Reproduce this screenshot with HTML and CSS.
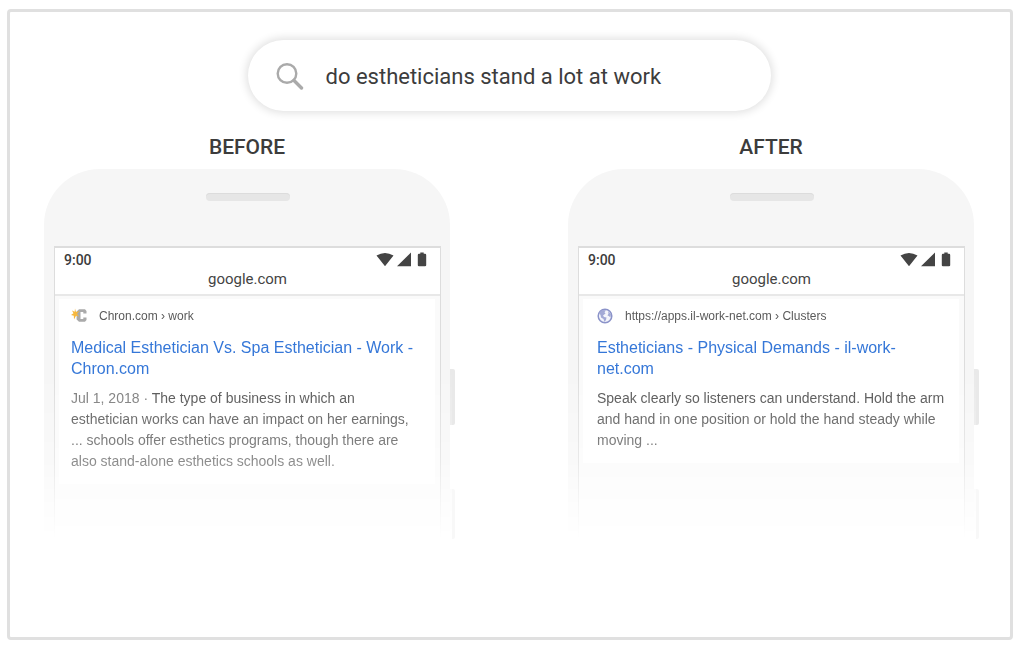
FILE: index.html
```html
<!DOCTYPE html>
<html lang="en">
<head>
<meta charset="utf-8">
<meta name="viewport" content="width=device-width, initial-scale=1">
<title>Search results before and after</title>
<link rel="stylesheet" href="styles.css">
</head>
<body>
<main class="frame">
  <form class="search" role="search">
    <svg class="search-icon" viewBox="0 0 28 28" aria-hidden="true">
      <circle cx="11" cy="11.5" r="9.3" fill="none" stroke="#aaa" stroke-width="2.4"/>
      <path d="M18 18.5 L25.5 26" fill="none" stroke="#aaa" stroke-width="3.4" stroke-linecap="round"/>
    </svg>
    <input class="search-input" type="text" aria-label="Search" value="do estheticians stand a lot at work">
  </form>

  <div class="compare">
    <section class="side">
      <h2 class="label">BEFORE</h2>
      <div class="phone">
        <div class="speaker"></div>
        <div class="screen">
          <header class="bar">
            <div class="status">
              <span class="time">9:00</span>
              <svg class="status-icons" viewBox="0 0 52 16" aria-hidden="true">
                <path d="M0.5 3.5 Q9 -1.5 17.5 3.5 L9 14.2 Z M21 14.2 L35 0.5 V14.2 Z M41.8 3 Q41.8 1.8 43 1.8 H44.3 V0.4 H47.7 V1.8 H49 Q50.2 1.8 50.2 3 V13.2 Q50.2 14.2 49 14.2 H43 Q41.8 14.2 41.8 13.2 Z" fill="#444"/>
              </svg>
            </div>
            <div class="domain">google.com</div>
          </header>
          <article class="result">
            <div class="source">
              <svg class="favicon" viewBox="0 0 16 16" aria-hidden="true">
                <path d="M15.5 5.5 V3 L14 1.3 H8 L5.6 3.6 V11.4 L8 13.7 H14 L15.5 12 V9.4 H12.3 V11 H9.5 V4 H12.3 V5.5 Z" fill="#aaa"/>
                <path d="M4 0.5 L5 4 L8.5 3 L6 5.7 L8 8.5 L5 7.8 L3 11.5 L2.8 7.8 L0 7 L2.5 5.3 L1 2.5 L3.7 3.7 Z" fill="#f6b73c"/>
              </svg>
              <span>Chron.com › work</span>
            </div>
            <h3 class="title"><a class="link" href="#">Medical Esthetician Vs. Spa Esthetician - Work - Chron.com</a></h3>
            <p class="snippet"><span class="date">Jul 1, 2018 ·</span> The type of business in which an esthetician works can have an impact on her earnings, ... schools offer esthetics programs, though there are also stand-alone esthetics schools as well.</p>
          </article>
        </div>
        <div class="key"></div>
        <div class="key key-low"></div>
      </div>
    </section>

    <section class="side">
      <h2 class="label">AFTER</h2>
      <div class="phone">
        <div class="speaker"></div>
        <div class="screen">
          <header class="bar">
            <div class="status">
              <span class="time">9:00</span>
              <svg class="status-icons" viewBox="0 0 52 16" aria-hidden="true">
                <path d="M0.5 3.5 Q9 -1.5 17.5 3.5 L9 14.2 Z M21 14.2 L35 0.5 V14.2 Z M41.8 3 Q41.8 1.8 43 1.8 H44.3 V0.4 H47.7 V1.8 H49 Q50.2 1.8 50.2 3 V13.2 Q50.2 14.2 49 14.2 H43 Q41.8 14.2 41.8 13.2 Z" fill="#444"/>
              </svg>
            </div>
            <div class="domain">google.com</div>
          </header>
          <article class="result result-after">
            <div class="source">
              <svg class="favicon" viewBox="0 0 16 16" aria-hidden="true">
                <circle cx="8" cy="8" r="6.8" fill="#f4f5fb" stroke="#8b93c9" stroke-width="1.5"/>
                <path d="M2 5 L5 2 L9 2.3 L7.5 4.3 L8.5 5.5 L6 7.5 L7 9 L9.5 9.5 L9 12 L7.5 14 L6.5 11 L4 9.5 L3.5 7 Z M11 3 L14 6 L13.5 9.5 L11.8 8 L10.5 7.5 L11.5 5.5 Z" fill="#a3aad6"/>
              </svg>
              <span>https://apps.il-work-net.com › Clusters</span>
            </div>
            <h3 class="title"><a class="link" href="#">Estheticians - Physical Demands - il-work-net.com</a></h3>
            <p class="snippet">Speak clearly so listeners can understand. Hold the arm and hand in one position or hold the hand steady while moving ...</p>
          </article>
        </div>
        <div class="key"></div>
        <div class="key key-low"></div>
      </div>
    </section>
  </div>
</main>
</body>
</html>
```
FILE: styles.css
```css
* { box-sizing: border-box; }

body {
  margin: 0;
  padding: 9px 7px 10px;
  min-height: 100vh;
  display: flex;
  background: #fff;
  color: #3c4043;
  font-family: "Liberation Sans", Arial, sans-serif;
}

.frame {
  flex: 1;
  padding: 28px 34px 28px 32px;
  border: 3px solid #e0e0e0;
  border-radius: 4px;
}

.search {
  display: flex;
  align-items: center;
  gap: 22px;
  max-width: 523px;
  margin: 0 auto;
  padding: 20px 28px;
  border-radius: 36px;
  background: #fff;
  box-shadow: 0 0 8px 2px rgba(0, 0, 0, 0.12);
}

.search-icon { flex: none; width: 28px; height: 28px; }

.search-input {
  flex: 1;
  min-width: 0;
  height: 31px;
  padding: 2px 0 0;
  border: 0;
  outline: 0;
  background: none;
  color: #3c3c3c;
  font-family: Roboto, sans-serif;
  font-size: 22px;
}

.compare {
  display: grid;
  grid-template-columns: repeat(2, minmax(0, 406px));
  justify-content: center;
  gap: 118px;
  margin-top: 22px;
}

.label {
  margin: 0 0 8px;
  color: #3c3c3c;
  font-family: Roboto, sans-serif;
  font-size: 21px;
  font-weight: 500;
  line-height: 28px;
  text-align: center;
}

.phone {
  position: relative;
  padding: 24px 9px 0 10px;
  border-radius: 56px 56px 0 0;
  background: #f6f6f6;
  -webkit-mask: linear-gradient(#000 200px, rgba(0, 0, 0, 0.65) 292px, rgba(0, 0, 0, 0.3) 330px, transparent 370px) no-clip;
  mask: linear-gradient(#000 200px, rgba(0, 0, 0, 0.65) 292px, rgba(0, 0, 0, 0.3) 330px, transparent 370px) no-clip;
}

.speaker {
  width: 84px;
  height: 8px;
  margin: 0 auto 45px;
  border-radius: 4px;
  background: #e6e6e6;
  box-shadow: inset 0 1px #dcdcdc;
}

.screen {
  min-height: 293px;
  border: 2px solid #ddd;
  border-width: 2px 1px 0;
  background: #fafafa;
}

.bar {
  padding: 3px 9px 5px;
  border-bottom: 2px solid #e8e8e8;
  background: #fff;
  font-family: Roboto, sans-serif;
}

.status {
  display: flex;
  align-items: center;
  justify-content: space-between;
  height: 18px;
  padding-right: 3px;
}

.time { color: #3c3c3c; font-size: 14px; font-weight: 500; }
.status-icons { width: 52px; height: 16px; }

.domain {
  color: #444;
  font-size: 15px;
  line-height: 20px;
  text-align: center;
}

.result {
  margin: 3px 5px 0 4px;
  padding: 8px 12px 12px;
  background: #fff;
}

.result-after { padding-left: 14px; padding-right: 6px; }

.source {
  display: flex;
  align-items: center;
  gap: 12px;
  height: 18px;
  color: #5a5a5a;
  font-size: 12px;
}

.favicon { width: 16px; height: 16px; }

.title {
  max-width: 352px;
  margin: 12px 0 9px;
  font-size: 16px;
  font-weight: 400;
  line-height: 21px;
}

.link { color: #3577d8; text-decoration: none; }

.snippet {
  margin: 0;
  color: #4d4d4d;
  font-size: 14px;
  line-height: 21px;
}

.date { color: #777; }

.key {
  position: absolute;
  left: 100%;
  top: 200px;
  width: 5px;
  height: 56px;
  border-radius: 0 2px 2px 0;
  background: #e9e9e9;
}

.key-low { top: 320px; height: 50px; background: #f8f8f8; }
```
